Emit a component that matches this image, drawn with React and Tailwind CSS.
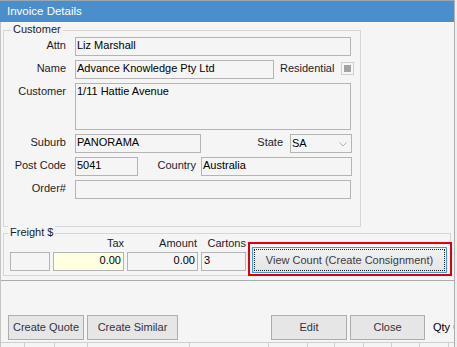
import React from "react";

const inputBox = "h-[19px] border border-[#b4b4b4] bg-[#f5f5f5] px-[1px] leading-[15px] text-black whitespace-nowrap overflow-hidden";
const label = "shrink-0 leading-[17px] pb-[2px] text-[#1c1c28] whitespace-nowrap";
const btn = "h-[25px] shrink-0 whitespace-nowrap border border-[#adadad] bg-[#e6e6e6] text-[11px] text-[#33333d]";

const GroupBox = ({ title, titleLeft, className, children }) => (
  <div className={`relative border border-[#d6d6d6] ${className}`}>
    <span className={`absolute -top-[8px] ${titleLeft} bg-[#f5f5f5] px-[2px] leading-[13px] text-[#1c1c28]`}>
      {title}
    </span>
    {children}
  </div>
);

const Row = ({ children, className = "" }) => (
  <div className={`flex items-start ${className}`}>{children}</div>
);

const FieldLabel = ({ children }) => (
  <div className={`${label} w-[62px] mr-[9px] text-right`}>{children}</div>
);

const gridWidths = [24, 30, 33, 102, 79, 39, 27, 29, 28, 28, 29];

const FreightLabels = () => (
  <div className="grid h-[13px] grid-cols-[40px_71px_71px_45px] gap-x-[3px] leading-[11px] text-[#1c1c28]">
    <span />
    <span className="text-right">Tax</span>
    <span className="text-right pr-[1px]">Amount</span>
    <span className="text-right">Cartons</span>
  </div>
);

export default function App() {
  return (
    <div className="w-[457px] h-[347px] bg-[#efefef] font-['Liberation_Sans',Arial,sans-serif] text-[11px]">
      <div className="flex h-[347px] w-[455px] flex-col overflow-hidden border-r border-[#b0b0b0] bg-[#f5f5f5]">
        {/* Title bar */}
        <div className="h-[22px] shrink-0 border-t border-[#9aa6b2] bg-[#4a8fcc] pl-[7px] text-[11.5px] leading-[21px] text-white">
          Invoice Details
        </div>

        <div className="flex flex-1 flex-col border-l border-[#c4c4c4]">
          {/* Main panel */}
          <div className="border-b border-[#ababab] pb-[4px]">
            <GroupBox title="Customer" titleLeft="left-[7px]" className="ml-[2px] mt-[8px] h-[197px] w-[358px]">
              <div className="flex flex-col gap-[4px] pt-[6px]">
                <Row>
                  <FieldLabel>Attn</FieldLabel>
                  <div className={`${inputBox} w-[276px]`}>Liz Marshall</div>
                </Row>
                <Row>
                  <FieldLabel>Name</FieldLabel>
                  <div className={`${inputBox} w-[199px]`}>Advance Knowledge Pty Ltd</div>
                  <div className={`${label} ml-[6px]`}>Residential</div>
                  <div className="ml-[7px] mt-[2px] flex h-[13px] w-[13px] items-center justify-center border border-[#cfcfcf] bg-[#f7f7f7]">
                    <div className="h-[7px] w-[7px] bg-[#a3a3a3]" />
                  </div>
                </Row>
                <Row>
                  <FieldLabel>Customer</FieldLabel>
                  <div className={`${inputBox} h-[47px] w-[276px]`}>1/11 Hattie Avenue</div>
                </Row>
                <Row>
                  <FieldLabel>Suburb</FieldLabel>
                  <div className={`${inputBox} w-[126px]`}>PANORAMA</div>
                  <div className={`${label} flex-1 pr-[7px] text-right`}>State</div>
                  <div className={`${inputBox} mr-[8px] flex w-[62px] items-center justify-between pr-[4px]`}>
                    <span>SA</span>
                    <svg width="8" height="5" viewBox="0 0 8 5" className="mt-[1px]">
                      <polyline points="0.5,0.5 4,4 7.5,0.5" fill="none" stroke="#b3b3b3" strokeWidth="1" />
                    </svg>
                  </div>
                </Row>
                <Row>
                  <FieldLabel>Post Code</FieldLabel>
                  <div className={`${inputBox} w-[63px]`}>5041</div>
                  <div className={`${label} flex-1 pr-[5px] text-right`}>Country</div>
                  <div className={`${inputBox} mr-[8px] w-[151px]`}>Australia</div>
                </Row>
                <Row>
                  <FieldLabel>Order#</FieldLabel>
                  <div className={`${inputBox} w-[276px]`}></div>
                </Row>
              </div>
            </GroupBox>

            <GroupBox title="Freight $" titleLeft="left-[4px]" className="ml-[2px] mt-[6px] h-[43px] w-[448px]">
              <div className="flex items-start pl-[6px] pt-[4px]">
                <div className="flex flex-col">
                  <FreightLabels />
                  <div className="mt-[1px] flex gap-[3px]">
                    <div className={`${inputBox} w-[40px]`}></div>
                    <div className={`${inputBox} w-[71px] bg-[#ffffe1] pr-[2px] text-right`}>0.00</div>
                    <div className={`${inputBox} w-[71px] pr-[2px] text-right`}>0.00</div>
                    <div className={`${inputBox} w-[45px] pl-[2px]`}>3</div>
                  </div>
                </div>
                <div className="relative ml-[6px] mt-[9px]">
                  <button className="flex h-[26px] w-[195px] border border-[#3c9bf0] bg-gradient-to-b from-[#f2f2f2] to-[#e4e4e4] p-[1px] text-[11px] text-[#3a3a44]">
                    <span className="flex h-full w-full items-center justify-center border border-dotted border-[#222]">
                      View Count (Create Consignment)
                    </span>
                  </button>
                  <div className="pointer-events-none absolute -bottom-[3px] -left-[4px] -right-[5px] -top-[5px] border-2 border-[#e0000c]" />
                </div>
              </div>
            </GroupBox>
          </div>

          {/* Bottom buttons */}
          <div className="mt-[34px] flex items-center pl-[7px]">
            <button className={`${btn} w-[76px]`}>Create Quote</button>
            <button className={`${btn} ml-[3px] w-[91px]`}>Create Similar</button>
            <button className={`${btn} ml-[93px] w-[76px]`}>Edit</button>
            <button className={`${btn} ml-[3px] w-[75px]`}>Close</button>
            <span className="ml-[8px] shrink-0 whitespace-nowrap text-black">Qty Ordered</span>
          </div>

          {/* Grid header strip */}
          <div className="mt-[2px] flex h-[6px] border-t border-[#cfcfcf]">
            {gridWidths.map((w, i) => (
              <div key={i} style={{ width: w }} className="h-full shrink-0 border-r border-[#cfcfcf]" />
            ))}
          </div>
        </div>
      </div>
    </div>
  );
}
